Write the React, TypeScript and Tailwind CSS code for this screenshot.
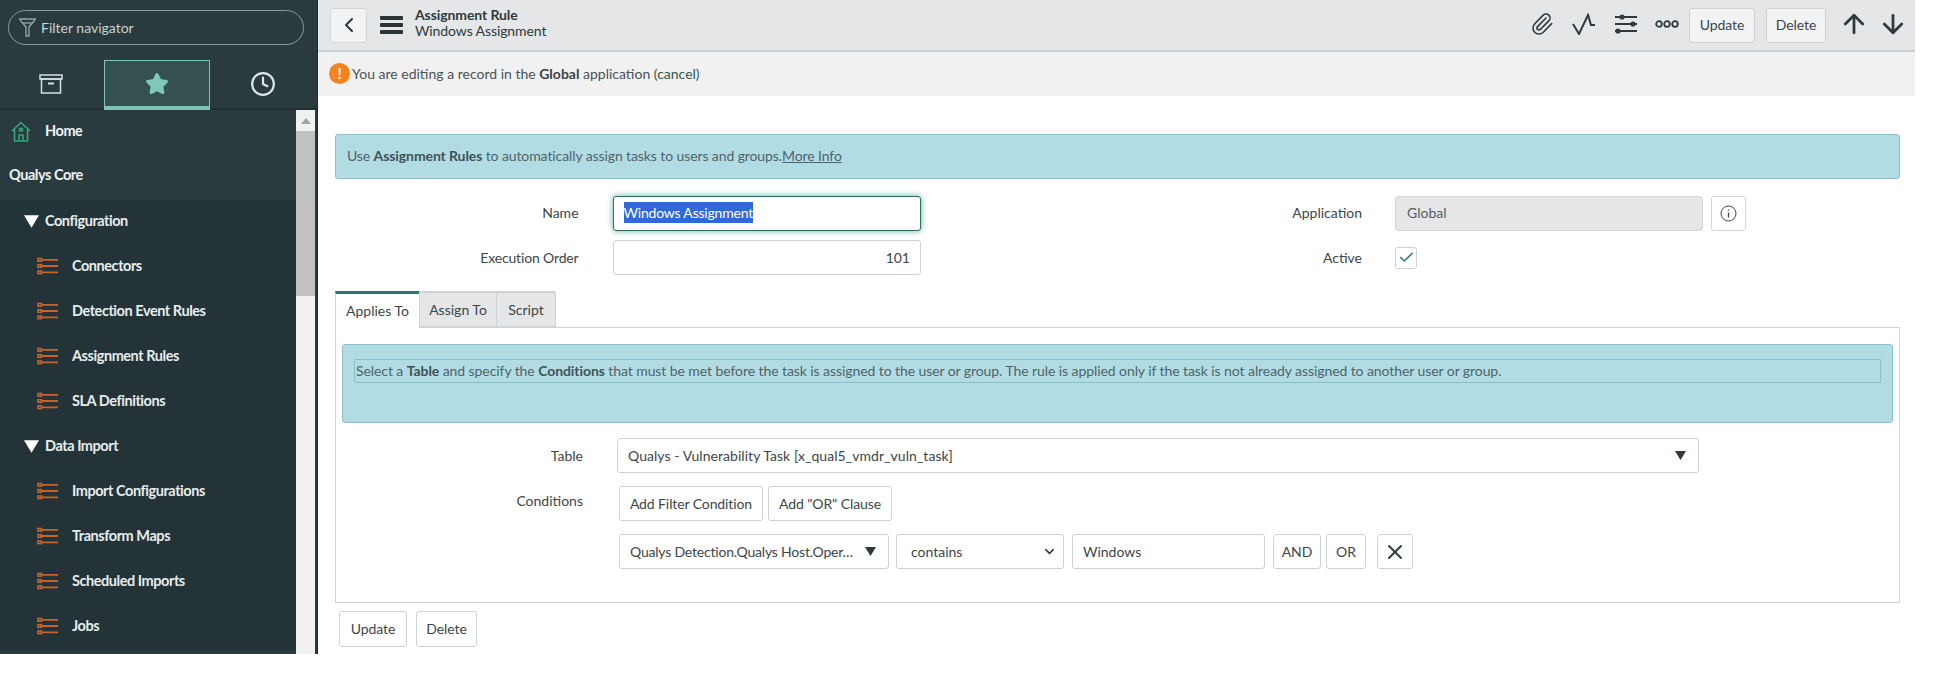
import React from 'react';
import { ChevronDown, ChevronLeft, X, ArrowUp, ArrowDown, Check, Paperclip, Star, Clock } from 'lucide-react';

const ListIcon = () => (
    <svg width="22" height="18" viewBox="0 0 22 18" fill="none" stroke="#c9632c" strokeWidth="1.6">
        <rect x="1" y="1.5" width="3.4" height="2.6" />
        <rect x="1" y="7.7" width="3.4" height="2.6" />
        <rect x="1" y="14" width="3.4" height="2.6" />
        <path d="M5 2.8h16M5 9h16M5 15.3h16" strokeWidth="1.8" />
    </svg>
);

const Caret = ({ size = 12, color = '#fff' }: { size?: number; color?: string }) => (
    <svg width={size} height={size} viewBox="0 0 12 12"><path d="M0 1h12L6 11z" fill={color} /></svg>
);

const NavItem = ({ label }: { label: string }) => (
    <div className="h-[45px] flex items-center pb-[3px] pl-[37px] text-[14.5px] tracking-[-0.45px] font-bold text-[#e6eded]">
        <ListIcon />
        <span className="ml-[13px]">{label}</span>
    </div>
);

const NavGroup = ({ label }: { label: string }) => (
    <div className="h-[45px] flex items-center pb-[3px] pl-[24px] text-[14.5px] tracking-[-0.45px] font-bold text-[#e6eded]">
        <Caret size={15} />
        <span className="ml-[6px]">{label}</span>
    </div>
);

const Btn = ({ label, className = '' }: { label: string; className?: string }) => (
    <div className={`h-[35px] flex items-center justify-center pb-[1px] border border-[#cfd2d4] rounded-[3px] bg-white text-[14px] tracking-[-0.1px] text-[#3d4649] ${className}`}>{label}</div>
);

const Sidebar = () => (
    <div className="w-[318px] shrink-0 flex flex-col bg-[#2a3b3f] border-r border-[#1d2a2d]">
        <div className="pt-[10px] pl-[8px]">
            <div className="w-[296px] h-[35px] rounded-full border border-[#8b9a9c] flex items-center pl-[9px] text-[14px] text-[#c9d1d2]">
                <svg width="20" height="22" viewBox="0 0 20 22" fill="none" stroke="#9aa7a9" strokeWidth="1.3">
                    <path d="M1 2h17M2 3l6 7v9h3V10l6-7" />
                    <path d="M4 6h11" />
                </svg>
                <span className="ml-[3px]">Filter navigator</span>
            </div>
        </div>
        <div className="mt-[15px] h-[50px] flex border-b-2 border-[#223035]">
            <div className="w-[104px] flex items-center justify-center">
                <svg className="-ml-[2px]" width="24" height="20" viewBox="0 0 24 20" fill="none" stroke="#d9dfe0" strokeWidth="1.5">
                    <rect x="1" y="1" width="22" height="4" />
                    <rect x="2.5" y="5" width="19" height="14" />
                    <path d="M9 9.5h6" strokeWidth="2" />
                </svg>
            </div>
            <div className="w-[106px] h-[50px] flex items-center justify-center bg-[#34504f] border border-[#7fc4b4] border-b-[4px]">
                <Star size={24} fill="#7fc8b6" stroke="#7fc8b6" />
            </div>
            <div className="flex-1 flex items-center justify-center">
                <Clock size={26} stroke="#dfe4e4" strokeWidth={2} className="-ml-[2px]" />
            </div>
        </div>
        <div className="flex flex-1 min-h-0">
            <div className="w-[296px]">
                <div className="h-[45px] flex items-center pb-[3px] pl-[11px] text-[14.5px] tracking-[-0.45px] font-bold text-[#eef3f3]">
                    <svg width="20" height="21" viewBox="0 0 20 21" fill="none" stroke="#35a57b" strokeWidth="1.6">
                        <path d="M1 10 10 1.5 19 10M3.5 8.5V20h13V8.5M8 20v-6h4v6" />
                        <rect x="8.6" y="7.5" width="2.8" height="2.4" />
                    </svg>
                    <span className="ml-[14px]">Home</span>
                </div>
                <div className="h-[45px] flex items-center pb-[5px] pl-[9px] text-[14.5px] tracking-[-0.45px] font-bold text-[#eef3f3]">Qualys Core</div>
                <div className="bg-[#243338]">
                    <NavGroup label="Configuration" />
                    <NavItem label="Connectors" />
                    <NavItem label="Detection Event Rules" />
                    <NavItem label="Assignment Rules" />
                    <NavItem label="SLA Definitions" />
                    <NavGroup label="Data Import" />
                    <NavItem label="Import Configurations" />
                    <NavItem label="Transform Maps" />
                    <NavItem label="Scheduled Imports" />
                    <NavItem label="Jobs" />
                </div>
            </div>
            <div className="w-[19px] bg-[#f1f1f1] flex flex-col">
                <div className="h-[21px] flex items-center justify-center">
                    <svg width="10" height="6" viewBox="0 0 10 6"><path d="M5 0l5 6H0z" fill="#a3a3a3" /></svg>
                </div>
                <div className="h-[165px] bg-[#c1c1c1]" />
            </div>
        </div>
    </div>
);

const Header = () => (
    <div className="h-[52px] shrink-0 flex items-center bg-[#e4e6e8] border-b-2 border-[#cdd0d2] pl-[12px] pr-[7px]">
        <div className="w-[37px] h-[35px] flex items-center justify-center border border-[#d3d6d8] rounded-[3px] bg-[#f1f3f5]">
            <ChevronLeft size={24} stroke="#2e3a3e" strokeWidth={2} />
        </div>
        <div className="ml-[13px] w-[23px] flex flex-col gap-[3px]">
            <div className="h-[4px] bg-[#293336] rounded-[1px]" />
            <div className="h-[4px] bg-[#293336] rounded-[1px]" />
            <div className="h-[4px] bg-[#293336] rounded-[1px]" />
        </div>
        <div className="ml-[12px] pb-[4px] text-[14px] tracking-[-0.1px] leading-[16px] text-[#2e3a3e]">
            <div className="font-bold">Assignment Rule</div>
            <div>Windows Assignment</div>
        </div>
        <div className="ml-auto flex items-center">
            <Paperclip size={24} stroke="#2e3a3e" strokeWidth={1.6} className="-mt-[2px]" />
            <svg className="ml-[18px] -mt-[2px]" width="24" height="22" viewBox="0 0 24 22" fill="none" stroke="#2e3a3e" strokeWidth="2">
                <path d="M1 11 7 21 16 2l3 10h4" />
            </svg>
            <svg className="ml-[18px] -mt-[2px]" width="24" height="24" viewBox="0 0 24 24" fill="#2e3a3e" stroke="#2e3a3e" strokeWidth="2">
                <path d="M1 5h22M1 12h22M1 19h22" />
                <circle cx="8" cy="5" r="1.6" />
                <circle cx="19" cy="12" r="1.6" />
                <circle cx="4" cy="19" r="1.6" />
            </svg>
            <svg className="ml-[17px] -mt-[2px]" width="24" height="10" viewBox="0 0 24 10" fill="none" stroke="#2e3a3e" strokeWidth="1.8">
                <circle cx="4" cy="5" r="2.8" />
                <circle cx="12" cy="5" r="2.8" />
                <circle cx="20" cy="5" r="2.8" />
            </svg>
            <Btn label="Update" className="ml-[10px] w-[66px] !bg-[#f1f3f5]" />
            <Btn label="Delete" className="ml-[11px] w-[60px] !bg-[#f1f3f5]" />
            <ArrowUp size={30} stroke="#2e3a3e" strokeWidth={2.2} className="ml-[13px] -mt-[2px]" />
            <ArrowDown size={30} stroke="#2e3a3e" strokeWidth={2.2} className="ml-[9px] -mt-[2px]" />
        </div>
    </div>
);

const App = () => (
    <div className="w-[1949px] h-[685px] bg-white font-['Lato','Liberation_Sans',sans-serif] overflow-hidden">
        <div className="w-[1915px] h-[654px] flex">
            <Sidebar />
            <div className="flex-1 flex flex-col min-w-0">
                <Header />
                <div className="h-[44px] shrink-0 flex items-center pb-[2px] bg-[#f1f1f1] pl-[11px] text-[14px] text-[#4a5356]">
                    <div className="w-[21px] h-[21px] mt-[1px] rounded-full bg-[#f58220] flex items-center justify-center text-white text-[15px] font-bold">!</div>
                    <span className="ml-[2px]">You are editing a record in the <b className="text-[#3a4346]">Global</b> application (<span className="text-[#2e5a50]">cancel</span>)</span>
                </div>

                <div className="pt-[38px] pl-[17px] pr-[15px]">
                    <div className="h-[45px] flex items-center pb-[2px] bg-[#b2dce4] border border-[#8cbfc9] rounded-[3px] pl-[11px] text-[14px] tracking-[-0.1px] text-[#4f6469]">
                        <span>Use <b className="text-[#3f5257]">Assignment Rules</b> to automatically assign tasks to users and groups.<span className="underline">More Info</span></span>
                    </div>

                    <div className="mt-[17px] grid grid-cols-[586px_1fr] gap-y-[9px] text-[14px] text-[#3d4649]">
                        <div className="flex items-center h-[35px]">
                            <div className="w-[244px] pb-[2px] text-right">Name</div>
                            <div className="ml-[34px] w-[309px] h-[35px] flex items-center pb-[2px] pl-[10px] bg-white border border-[#2f6f66] rounded-[3px] shadow-[0_0_6px_#5fae9f]">
                                <span className="bg-[#3168d8] text-white tracking-[-0.2px]">Windows Assignment</span>
                            </div>
                        </div>
                        <div className="flex items-center h-[35px]">
                            <div className="w-[441px] pb-[2px] text-right">Application</div>
                            <div className="ml-[33px] w-[308px] h-[35px] flex items-center pb-[2px] pl-[11px] bg-[#e4e6e7] border border-[#d3d5d6] rounded-[3px] text-[#555e61]">Global</div>
                            <div className="ml-[8px] w-[35px] h-[35px] flex items-center justify-center border border-[#d3d6d8] rounded-[3px]">
                                <svg width="17" height="17" viewBox="0 0 17 17" fill="none" stroke="#3d4649" strokeWidth="1"><circle cx="8.5" cy="8.5" r="7.5" /><path d="M8.5 7.5v5M8.5 4.4v1.4" strokeWidth="1.3" /></svg>
                            </div>
                        </div>
                        <div className="flex items-center h-[35px]">
                            <div className="w-[244px] pb-[1px] text-right tracking-[-0.15px]">Execution Order</div>
                            <div className="ml-[34px] w-[309px] h-[35px] flex items-center justify-end pr-[10px] bg-white border border-[#cfd2d4] rounded-[3px]">101</div>
                        </div>
                        <div className="flex items-center h-[35px]">
                            <div className="w-[441px] text-right">Active</div>
                            <div className="ml-[33px] w-[22px] h-[22px] flex items-center justify-center border border-[#cfd2d4] rounded-[3px]">
                                <Check size={17} stroke="#2f7a69" strokeWidth={2.2} />
                            </div>
                        </div>
                    </div>

                    <div className="mt-[16px] flex h-[36px] text-[14px] text-[#3d4649]">
                        <div className="w-[84px] flex items-center justify-center pb-[2px] bg-white border-t-[3px] border-t-[#2b7a6c] border-l border-l-[#cfd2d4] relative z-10 h-[37px]">Applies To</div>
                        <div className="w-[78px] flex items-center justify-center pb-[1px] bg-[#e4e6e7] border border-[#cfd2d4] border-t-2">Assign To</div>
                        <div className="w-[59px] flex items-center justify-center pb-[1px] bg-[#e4e6e7] border border-l-0 border-[#cfd2d4] border-t-2 rounded-tr-[3px]">Script</div>
                    </div>
                    <div className="h-[276px] border border-[#cfd2d4] px-[6px] pt-[16px] text-[14px] text-[#3d4649]">
                        <div className="h-[79px] bg-[#b2dce4] border border-[#8cbfc9] rounded-[3px] px-[11px] pt-[14px]">
                            <div className="h-[24px] flex items-center pb-[2px] border border-[#8cbfc9] rounded-[1px] pl-[1px] tracking-[-0.08px] text-[#4f6469]">
                                <span>Select a <b className="text-[#3f5257]">Table</b> and specify the <b className="text-[#3f5257]">Conditions</b> that must be met before the task is assigned to the user or group. The rule is applied only if the task is not already assigned to another user or group.</span>
                            </div>
                        </div>
                        <div className="mt-[15px] flex items-center h-[35px]">
                            <div className="w-[241px] pb-[1px] text-right">Table</div>
                            <div className="ml-[34px] w-[1082px] h-[35px] flex items-center justify-between pl-[10px] pr-[12px] border border-[#cfd2d4] rounded-[3px]">
                                <span className="tracking-[0.05px]">Qualys - Vulnerability Task [x_qual5_vmdr_vuln_task]</span>
                                <Caret size={11} color="#2e3a3e" />
                            </div>
                        </div>
                        <div className="mt-[13px] flex">
                            <div className="w-[241px] text-right leading-[30px]">Conditions</div>
                            <div className="ml-[36px]">
                                <div className="flex gap-[5px]">
                                    <Btn label="Add Filter Condition" className="w-[144px]" />
                                    <Btn label='Add "OR" Clause' className="w-[124px]" />
                                </div>
                                <div className="mt-[13px] flex items-center">
                                    <div className="w-[270px] h-[35px] flex items-center justify-between pl-[10px] pr-[12px] border border-[#cfd2d4] rounded-[3px]">
                                        <span className="whitespace-nowrap tracking-[-0.2px]">Qualys Detection.Qualys Host.Oper…</span>
                                        <Caret size={11} color="#2e3a3e" />
                                    </div>
                                    <div className="ml-[7px] w-[168px] h-[35px] flex items-center justify-between pl-[14px] pr-[6px] border border-[#cfd2d4] rounded-[3px]">
                                        <span>contains</span>
                                        <ChevronDown size={15} stroke="#2e3a3e" strokeWidth={2.4} />
                                    </div>
                                    <div className="ml-[8px] w-[193px] h-[35px] flex items-center pl-[10px] border border-[#cfd2d4] rounded-[3px]">Windows</div>
                                    <Btn label="AND" className="ml-[8px] w-[48px]" />
                                    <Btn label="OR" className="ml-[5px] w-[40px]" />
                                    <div className="ml-[11px] w-[36px] h-[35px] flex items-center justify-center border border-[#cfd2d4] rounded-[3px]">
                                        <X size={24} stroke="#2e3a3e" strokeWidth={2} />
                                    </div>
                                </div>
                            </div>
                        </div>
                    </div>
                    <div className="mt-[8px] ml-[4px] flex gap-[9px]">
                        <Btn label="Update" className="w-[68px] !h-[36px]" />
                        <Btn label="Delete" className="w-[61px] !h-[36px]" />
                    </div>
                </div>
            </div>
        </div>
    </div>
);

export default App;
